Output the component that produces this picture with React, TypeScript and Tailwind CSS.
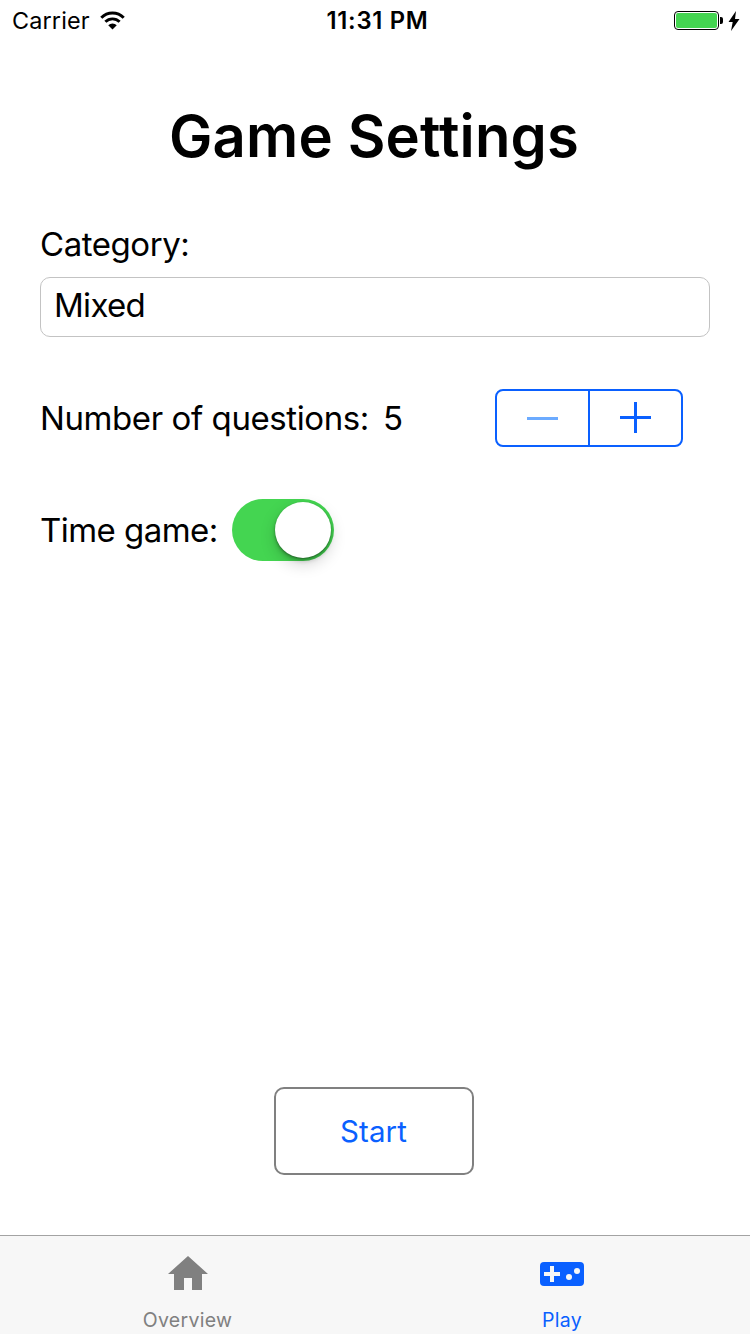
import { useState } from "react";

function WifiIcon() {
  return (
    <svg width="25" height="19" viewBox="0 0 26 20" fill="none" stroke="#000" strokeWidth="3.1">
      <path d="M1.2 7.1a16.4 16.4 0 0 1 23.6 0" />
      <path d="M5.5 11.4a10.6 10.6 0 0 1 15 0" />
      <path d="M13 19.500l-4.500-4.500a6.400 6.400 0 0 1 9 0z" fill="#000" stroke="none" />
    </svg>
  );
}

function StatusBar() {
  return (
    <header className="grid h-10 grid-cols-3 items-center pr-[10px] pl-3 text-[23.4px] leading-10">
      <div className="flex items-center">
        <span className="w-[88px] pt-px tracking-[0.15px]">Carrier</span>
        <WifiIcon />
      </div>
      <div className="pt-px pl-[3px] text-center text-[23.8px] font-semibold tracking-[0.7px] whitespace-nowrap">11:31 PM</div>
      <div className="flex items-center justify-end">
        <div className="h-[19px] w-[45px] rounded-[4px] border border-black p-px">
          <div className="h-full w-full rounded-[2px] bg-[#44d551]" />
        </div>
        <div className="ml-px h-[7px] w-[3px] rounded-r-[2px] bg-black" />
        <svg className="ml-[5px]" width="12" height="20" viewBox="0 0 12 20">
          <path d="M8 0L0.500 11h4.200L3 20l8.500-12H7z" />
        </svg>
      </div>
    </header>
  );
}

function Stepper({ value, onChange }: { value: number; onChange: (v: number) => void }) {
  return (
    <div className="flex h-[58px] w-[188px] rounded-[8px] border-2 border-[#0a60ff]">
      <button
        aria-label="Decrease"
        className="flex w-[93px] items-center justify-center border-r-2 border-[#0a60ff]"
        onClick={() => onChange(Math.max(5, value - 1))}
      >
        <svg width="31" height="31" viewBox="0 0 31 31">
          <path d="M0 14h31v3H0z" fill="#6cabff" />
        </svg>
      </button>
      <button aria-label="Increase" className="flex flex-1 items-center pb-px pl-[30px]" onClick={() => onChange(value + 1)}>
        <svg width="31" height="31" viewBox="0 0 31 31">
          <path d="M0 14h31v3H0zM14 0h3v31h-3z" fill="#0a60ff" />
        </svg>
      </button>
    </div>
  );
}

function Switch() {
  return (
    <div className="flex h-[62px] w-[102px] items-center justify-end rounded-full bg-[#44d551] pr-[3px]">
      <div className="h-14 w-14 rounded-full bg-white shadow-[0_1px_2px_rgba(0,0,0,0.3),0_6px_16px_rgba(0,0,0,0.18),0_3px_4px_rgba(0,0,0,0.2)]" />
    </div>
  );
}

function TabBar() {
  return (
    <nav className="grid h-[99px] grid-cols-2 border-t border-[#a3a3a3] bg-[#f7f7f7] text-[19.5px] leading-6">
      <div className="flex flex-col items-center pt-[20px] text-[#808080]">
        <svg width="40" height="34" viewBox="0 0 40 34" fill="currentColor">
          <path d="M20 0l20 18h-6v16H24V22H16v12H6V18H0z" />
        </svg>
        <span className="mt-[18px] tracking-[0.3px]">Overview</span>
      </div>
      <div className="flex flex-col items-center pt-[26px] pr-px text-[#0a60ff]">
        <svg width="44" height="24" viewBox="0 0 44 24">
          <rect width="44" height="24" rx="4" fill="currentColor" />
          <path d="M10 4h4v6h6v4h-6v6h-4v-6H4v-4h6z" fill="#f7f7f7" />
          <circle cx="29" cy="15" r="3" fill="#f7f7f7" />
          <circle cx="37" cy="9" r="3" fill="#f7f7f7" />
        </svg>
        <span className="mt-[22px] tracking-[0.3px]">Play</span>
      </div>
    </nav>
  );
}

export default function App() {
  const [count, setCount] = useState(5);
  return (
    <div className="flex h-[1334px] w-[750px] flex-col overflow-hidden bg-white font-['Inter',sans-serif] text-black">
      <StatusBar />
      <main className="flex flex-1 flex-col px-10 text-[33px] leading-10">
        <h1 className="mt-14 pr-[2px] text-center text-[58px] leading-20 font-semibold tracking-[0.18px]">Game Settings</h1>
        <label className="mt-12 tracking-[-0.45px]">Category:</label>
        <div className="mt-[13px] flex h-[60px] items-center rounded-[10px] border border-[#c3c3c3] pb-1 pl-[13px] tracking-[-0.7px]">
          Mixed
        </div>
        <div className="mt-[52px] flex items-center">
          <span className="w-[343px] tracking-[-0.41px]">Number of questions:</span>
          <span className="w-28">{count}</span>
          <Stepper value={count} onChange={setCount} />
        </div>
        <div className="mt-[52px] flex items-center">
          <span className="w-48 tracking-[-0.55px]">Time game:</span>
          <Switch />
        </div>
        <button className="mt-auto mr-[2px] mb-[60px] h-[88px] w-[200px] self-center rounded-[10px] border-2 border-[#808080] pr-px text-[29.5px] tracking-[0.1px] text-[#0a60ff]">
          Start
        </button>
      </main>
      <TabBar />
    </div>
  );
}
